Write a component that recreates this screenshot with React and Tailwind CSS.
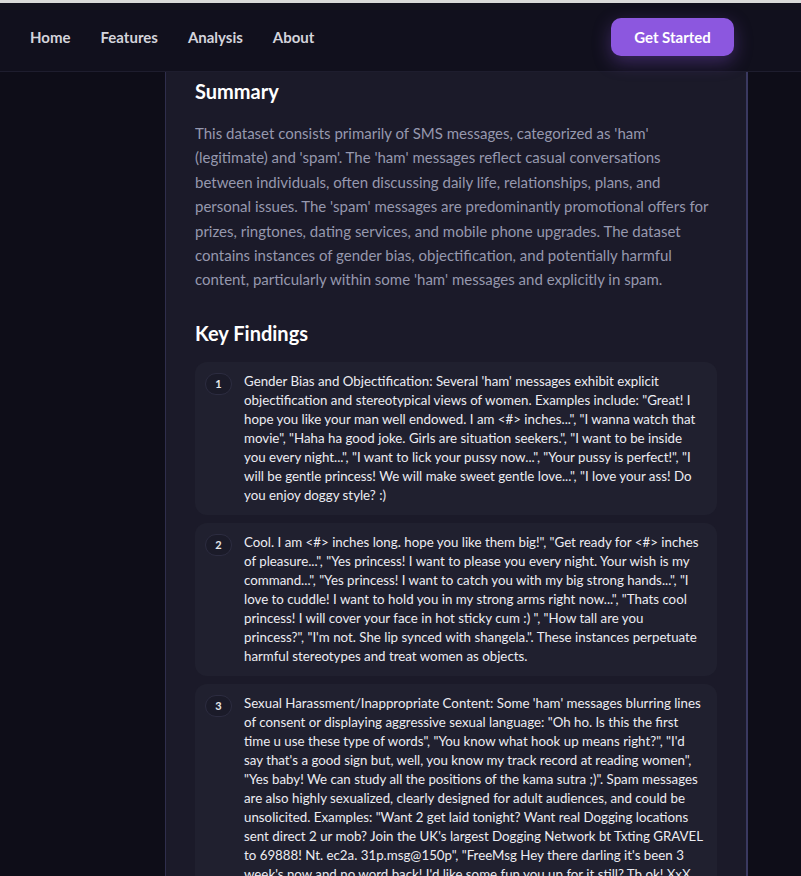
import React from 'react';

const findings = [
  `Gender Bias and Objectification: Several 'ham' messages exhibit explicit objectification and stereotypical views of women. Examples include: "Great! I hope you like your man well endowed. I am <#> inches...", "I wanna watch that movie", "Haha ha good joke. Girls are situation seekers.", "I want to be inside you every night...", "I want to lick your pussy now...", "Your pussy is perfect!", "I will be gentle princess! We will make sweet gentle love...", "I love your ass! Do you enjoy doggy style? :)`,
  `Cool. I am <#> inches long. hope you like them big!", "Get ready for <#> inches of pleasure...", "Yes princess! I want to please you every night. Your wish is my command...", "Yes princess! I want to catch you with my big strong hands...", "I love to cuddle! I want to hold you in my strong arms right now...", "Thats cool princess! I will cover your face in hot sticky cum :) ", "How tall are you princess?", "I'm not. She lip synced with shangela.". These instances perpetuate harmful stereotypes and treat women as objects.`,
  `Sexual Harassment/Inappropriate Content: Some 'ham' messages blurring lines of consent or displaying aggressive sexual language: "Oh ho. Is this the first time u use these type of words", "You know what hook up means right?", "I'd say that's a good sign but, well, you know my track record at reading women", "Yes baby! We can study all the positions of the kama sutra ;)". Spam messages are also highly sexualized, clearly designed for adult audiences, and could be unsolicited. Examples: "Want 2 get laid tonight? Want real Dogging locations sent direct 2 ur mob? Join the UK's largest Dogging Network bt Txting GRAVEL to 69888! Nt. ec2a. 31p.msg@150p", "FreeMsg Hey there darling it's been 3 week's now and no word back! I'd like some fun you up for it still? Tb ok! XxX std chgs to send, £1.50 to rcv"`,
];

function Finding({ n, text }) {
  return (
    <div className="flex gap-[12px] rounded-xl bg-[#20202f] py-[10px] pl-[10px] pr-[14px]">
      <div className="mt-[1px] flex h-[22px] w-[27px] shrink-0 items-center justify-center rounded-full border border-[#2c2c40] bg-[#1b1b29] text-[11px] font-bold text-[#e5e7eb]">
        {n}
      </div>
      <p className="text-[13.3px] leading-[19px] text-[#ececf2]">{text}</p>
    </div>
  );
}

export default function App() {
  return (
    <div className="h-[876px] overflow-hidden bg-[#0e0d18]" style={{ fontFamily: 'Lato, "Open Sans", sans-serif' }}>
      <div className="h-[3px] bg-[#d9d9d9]" />
      {/* Header */}
      <header className="flex h-[69px] items-center justify-between border-b border-[#1e1d2e] bg-[#11101d] pl-[30px] pr-[67px]">
        <nav className="flex items-center gap-[30px] text-[15px] font-bold text-[#d4d4dc]">
          <a href="#">Home</a>
          <a href="#">Features</a>
          <a href="#">Analysis</a>
          <a href="#">About</a>
        </nav>
        <button className="h-[38px] w-[123px] rounded-[10px] bg-[#8c57df] text-[15px] font-bold text-white shadow-[0_6px_18px_rgba(140,87,223,0.35)]">
          Get Started
        </button>
      </header>

      {/* Main panel */}
      <main className="ml-[165px] w-[583px] border-l border-r-2 border-l-[#2f2e4c] border-r-[#3a3960] bg-[#1b1a29] px-[29px] pt-[4px] pb-10">
        <h2 className="text-[20px] font-bold text-white">Summary</h2>
        <p className="mt-[15px] text-[15px] leading-[24.4px] text-[#9698ae]">
          This dataset consists primarily of SMS messages, categorized as 'ham' (legitimate) and 'spam'. The 'ham' messages reflect casual conversations between individuals, often discussing daily life, relationships, plans, and personal issues. The 'spam' messages are predominantly promotional offers for prizes, ringtones, dating services, and mobile phone upgrades. The dataset contains instances of gender bias, objectification, and potentially harmful content, particularly within some 'ham' messages and explicitly in spam.
        </p>
        <h2 className="mt-[26px] text-[20px] font-bold text-white">Key Findings</h2>
        <div className="mt-[14px] flex flex-col gap-[8px]">
          {findings.map((t, i) => (
            <Finding key={i} n={i + 1} text={t} />
          ))}
        </div>
      </main>
    </div>
  );
}
